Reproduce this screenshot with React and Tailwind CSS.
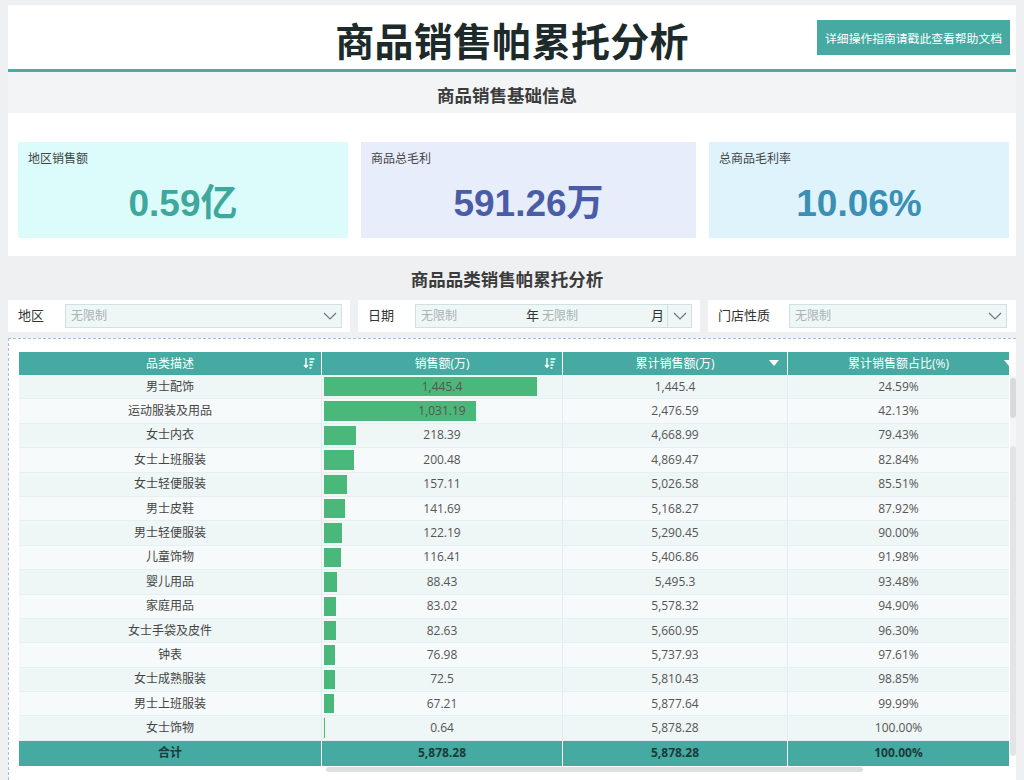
import React from 'react';

const rows = [
  { name: '男士配饰', sales: 1445.4, salesText: '1,445.4', cum: '1,445.4', pct: '24.59%' },
  { name: '运动服装及用品', sales: 1031.19, salesText: '1,031.19', cum: '2,476.59', pct: '42.13%' },
  { name: '女士内衣', sales: 218.39, salesText: '218.39', cum: '4,668.99', pct: '79.43%' },
  { name: '女士上班服装', sales: 200.48, salesText: '200.48', cum: '4,869.47', pct: '82.84%' },
  { name: '女士轻便服装', sales: 157.11, salesText: '157.11', cum: '5,026.58', pct: '85.51%' },
  { name: '男士皮鞋', sales: 141.69, salesText: '141.69', cum: '5,168.27', pct: '87.92%' },
  { name: '男士轻便服装', sales: 122.19, salesText: '122.19', cum: '5,290.45', pct: '90.00%' },
  { name: '儿童饰物', sales: 116.41, salesText: '116.41', cum: '5,406.86', pct: '91.98%' },
  { name: '婴儿用品', sales: 88.43, salesText: '88.43', cum: '5,495.3', pct: '93.48%' },
  { name: '家庭用品', sales: 83.02, salesText: '83.02', cum: '5,578.32', pct: '94.90%' },
  { name: '女士手袋及皮件', sales: 82.63, salesText: '82.63', cum: '5,660.95', pct: '96.30%' },
  { name: '钟表', sales: 76.98, salesText: '76.98', cum: '5,737.93', pct: '97.61%' },
  { name: '女士成熟服装', sales: 72.5, salesText: '72.5', cum: '5,810.43', pct: '98.85%' },
  { name: '男士上班服装', sales: 67.21, salesText: '67.21', cum: '5,877.64', pct: '99.99%' },
  { name: '女士饰物', sales: 0.64, salesText: '0.64', cum: '5,878.28', pct: '100.00%' },
];

const cards = [
  { label: '地区销售额', value: '0.59亿', box: 'w-[330px] bg-[#dcfcfb]', color: 'text-[#3ea89d]' },
  { label: '商品总毛利', value: '591.26万', box: 'w-[335px] bg-[#e8edfb]', color: 'text-[#4a5ca6]' },
  { label: '总商品毛利率', value: '10.06%', box: 'w-[300px] bg-[#def3fc]', color: 'text-[#3b8fb2]' },
];

const SortIcon = () => (
  <svg width="12" height="12" viewBox="0 0 12 12" fill="none" stroke="white" strokeWidth="1.4">
    <path d="M3 1v9M1 8l2 2.3L5 8" />
    <path d="M6.5 2h5M6.5 5h4M6.5 8h3M6.5 11h2" />
  </svg>
);

const TriIcon = () => (
  <svg width="10" height="7" viewBox="0 0 10 7">
    <path d="M0 0h10L5 6z" fill="white" />
  </svg>
);

const Chevron = () => (
  <svg width="14" height="8" viewBox="0 0 14 8" fill="none" stroke="#6b7b7b" strokeWidth="1.2">
    <path d="M1 1l6 6L13 1" />
  </svg>
);

const App = () => {
  const maxSales = 1445.4;

  return (
    <div className="w-[1024px] h-[780px] overflow-hidden bg-[#eef0f2] px-2 pt-[5px] font-['Open_Sans','Noto_Sans_CJK_SC',sans-serif] text-[#444]">
      {/* header */}
      <div className="h-[67px] bg-white border-b-[3px] border-[#4caaa2] grid grid-cols-[1fr_auto_1fr] items-center">
        <div />
        <h1 className="text-[39px] font-bold text-[#1d2a2a] leading-none pt-[4px] font-['Noto_Sans_CJK_SC',sans-serif] tracking-[0.3px]">商品销售帕累托分析</h1>
        <div className="flex justify-end pr-[6px] self-start pt-[15px]">
          <button className="h-[35px] px-[8px] bg-[#46aaa2] text-white text-[11.8px] font-['Noto_Sans_CJK_SC',sans-serif]">详细操作指南请戳此查看帮助文档</button>
        </div>
      </div>

      {/* section 1 */}
      <div className="h-[41px] bg-[#f3f4f6] flex items-center justify-center pt-[5px] pr-[10px] text-[17.5px] font-bold text-[#3b3b3b] font-['Noto_Sans_CJK_SC',sans-serif]">商品销售基础信息</div>
      <div className="h-[143px] bg-white pt-[29px] pl-[10px] flex gap-[13px]">
        {cards.map((c) => (
          <div key={c.label} className={`${c.box} h-[96px] px-[10px] pt-[7px] flex flex-col`}>
            <span className="text-[12px] text-[#444] font-['Noto_Sans_CJK_SC',sans-serif]">{c.label}</span>
            <span className={`${c.color} text-[37px] font-bold text-center leading-none mt-[18px] font-['Liberation_Sans','Noto_Sans_CJK_SC',sans-serif]`}>{c.value}</span>
          </div>
        ))}
      </div>

      {/* section 2 */}
      <div className="h-[34px] mt-[6px] flex items-center justify-center pr-[10px] text-[17.5px] font-bold text-[#3b3b3b] font-['Noto_Sans_CJK_SC',sans-serif]">商品品类销售帕累托分析</div>

      {/* filters */}
      <div className="h-[32px] mt-[4px] flex gap-[8px] text-[13px] text-[#333]">
        <div className="w-[342px] bg-white flex items-center pl-[10px] pr-[8px]">
          <span className="w-[47px]">地区</span>
          <div className="flex-1 h-[24px] bg-[#eef6f6] border border-[#cfe2e2] flex items-center justify-between pl-[5px] pr-[4px]">
            <span className="text-[12px] text-[#a9b4b4]">无限制</span>
            <Chevron />
          </div>
        </div>
        <div className="w-[342px] bg-white flex items-center pl-[10px] pr-[8px]">
          <span className="w-[47px]">日期</span>
          <div className="flex-1 h-[24px] bg-[#eef6f6] border border-[#cfe2e2] flex items-center pl-[5px]">
            <span className="text-[12px] text-[#a9b4b4] w-[105px]">无限制</span>
            <span className="w-[15px]">年</span>
            <span className="text-[12px] text-[#a9b4b4] w-[110px] pl-[1px]">无限制</span>
            <span>月</span>
            <div className="ml-auto h-full w-[24px] border-l border-[#cfe2e2] flex items-center justify-center">
              <Chevron />
            </div>
          </div>
        </div>
        <div className="w-[308px] bg-white flex items-center pl-[10px] pr-[9px]">
          <span className="w-[71px]">门店性质</span>
          <div className="flex-1 h-[24px] bg-[#eef6f6] border border-[#cfe2e2] flex items-center justify-between pl-[5px] pr-[4px]">
            <span className="text-[12px] text-[#a9b4b4]">无限制</span>
            <Chevron />
          </div>
        </div>
      </div>

      {/* table panel */}
      <div className="h-[442px] mt-[6px] bg-white border-t border-l border-dashed border-[#a8bde6] pt-[13px] pl-[10px] relative">
        <div className="w-[990px] text-[12px]">
          <div className="flex h-[23px] bg-[#45aaa2] text-white">
            <div className="w-[303px] border-r border-white flex items-center justify-center relative">
              品类描述
              <span className="absolute right-[6px] top-[5px]"><SortIcon /></span>
            </div>
            <div className="w-[241px] border-r border-white flex items-center justify-center relative">
              销售额(万)
              <span className="absolute right-[6px] top-[5px]"><SortIcon /></span>
            </div>
            <div className="w-[225px] border-r border-white flex items-center justify-center relative">
              累计销售额(万)
              <span className="absolute right-[8px] top-[8px]"><TriIcon /></span>
            </div>
            <div className="flex-1 flex items-center justify-center relative overflow-hidden">
              累计销售额占比(%)
              <span className="absolute right-[-5px] top-[8px]"><TriIcon /></span>
            </div>
          </div>
          {rows.map((r, i) => (
            <div key={r.name} className={`flex h-[24.4px] border-b border-[#e6f0f0] ${i % 2 === 0 ? 'bg-[#eef6f6]' : 'bg-[#f6fafa]'}`}>
              <div className="w-[303px] border-r border-[#e3eded] flex items-center justify-center text-[#444]">{r.name}</div>
              <div className="w-[241px] border-r border-[#e3eded] relative flex items-center justify-center">
                <div className="absolute left-[2px] top-[2px] bottom-[2px] bg-[#4bb87b]" style={{ width: Math.max(1, (r.sales / maxSales) * 213) }} />
                <span className="relative text-[#555]">{r.salesText}</span>
              </div>
              <div className="w-[225px] border-r border-[#e3eded] flex items-center justify-center text-[#555]">{r.cum}</div>
              <div className="flex-1 flex items-center justify-center text-[#555]">{r.pct}</div>
            </div>
          ))}
          <div className="flex h-[25px] bg-[#45aaa2] font-bold text-[#1c3a3a]">
            <div className="w-[303px] border-r border-white flex items-center justify-center">合计</div>
            <div className="w-[241px] border-r border-white flex items-center justify-center">5,878.28</div>
            <div className="w-[225px] border-r border-white flex items-center justify-center">5,878.28</div>
            <div className="flex-1 flex items-center justify-center">100.00%</div>
          </div>
        </div>
        {/* scrollbars */}
        <div className="absolute left-[1001px] top-[37px] w-[6px] h-[367px] bg-[#f4f5f6]">
          <div className="h-[40px] mt-[2px] bg-[#d8dadc] rounded-sm" />
          <div className="h-[310px] mt-[28px] bg-[#e2e4e6] rounded-sm" />
        </div>
        <div className="absolute left-[317px] top-[428px] w-[537px] h-[5px] bg-[#dddfe1] rounded-sm" />
      </div>
    </div>
  );
};

export default App;
